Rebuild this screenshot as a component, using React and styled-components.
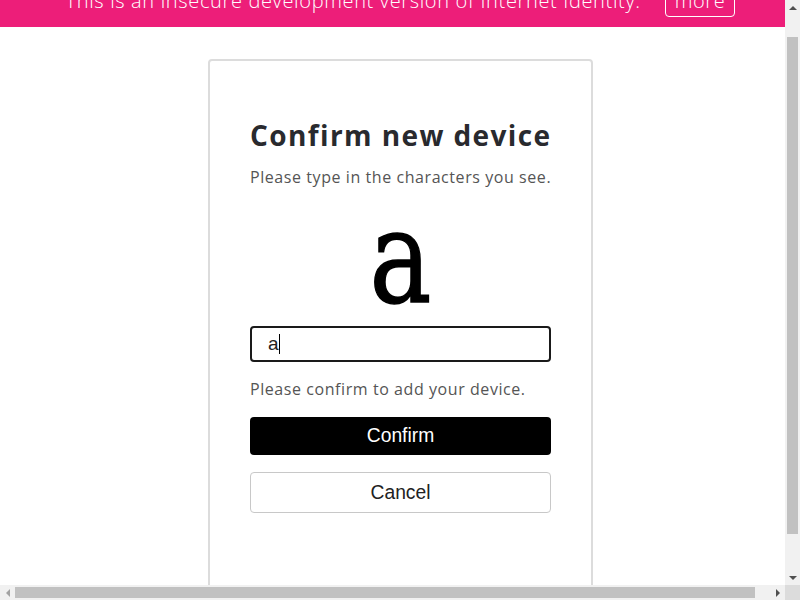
import React, { useLayoutEffect, useRef } from "react"
import styled, { createGlobalStyle } from "styled-components"

const GlobalStyle = createGlobalStyle`
  html, body {
    margin: 0;
    padding: 0;
    background: #fff;
    overflow: hidden;
  }
  body {
    font-family: "Open Sans", "Noto Sans", sans-serif;
  }
`

// browser frame: content area plus the two scroll bars and their corner
const Frame = styled.div`
  width: 800px;
  height: 600px;
  display: grid;
  grid-template-columns: 785px 15px;
  grid-template-rows: 585px 15px;
  background: #f1f1f1;
`

const Viewport = styled.div`
  overflow: hidden;
  background: #fff;
`

const ScrollBar = styled.div`
  display: flex;
  flex-direction: ${(p) => (p.$vertical ? "column" : "row")};
  background: #f1f1f1;
`

const Track = styled.div`
  flex: 1;
  display: flex;
  flex-direction: ${(p) => (p.$vertical ? "column" : "row")};
`

const Thumb = styled.div`
  background: #c1c1c1;
  ${(p) =>
    p.$vertical
      ? `margin: 22px 2px 0; height: 497px;`
      : `margin: 2px 0; width: 740px;`}
`

const ArrowButton = styled.div`
  width: 15px;
  height: 15px;
  flex: none;
  display: flex;
  align-items: center;
  justify-content: center;

  &::after {
    content: "";
    width: 0;
    height: 0;
    border: 4px solid transparent;
    ${(p) => {
      const c = p.$disabled ? "#a3a3a3" : "#505050"
      if (p.$dir === "up") return `border-bottom-color: ${c}; border-top-width: 0;`
      if (p.$dir === "down") return `border-top-color: ${c}; border-bottom-width: 0;`
      if (p.$dir === "left") return `border-right-color: ${c}; border-left-width: 0;`
      return `border-left-color: ${c}; border-right-width: 0;`
    }}
  }
`

const Corner = styled.div`
  background: #dcdcdc;
`

const Page = styled.div`
  width: 801px;
  min-height: 653px;
  display: flex;
  flex-direction: column;
  align-items: center;
`

const Banner = styled.div`
  align-self: stretch;
  height: 53px;
  background: #ed1e79;
  color: #fff;
  display: flex;
  align-items: center;
  justify-content: center;
  gap: 24px;
  font-size: 20px;
  font-weight: 300;
  letter-spacing: 0.65px;
`

const MoreButton = styled.button`
  background: transparent;
  color: #fff;
  border: 1px solid #fff;
  border-radius: 4px;
  height: 32px;
  padding: 0 9px;
  font-family: inherit;
  font-size: 20px;
  font-weight: 300;
  letter-spacing: 0.65px;
`

const Card = styled.main`
  margin-top: 32px;
  width: 385px;
  height: 536px;
  box-sizing: border-box;
  border: 2px solid #dcdcdc;
  border-radius: 4px;
  padding: 56px 40px 40px;
  display: flex;
  flex-direction: column;
`

const Title = styled.h1`
  margin: 0;
  font-size: 28px;
  font-weight: 700;
  color: #292a2e;
  line-height: 36px;
  letter-spacing: 1.4px;
  white-space: nowrap;
`

const Paragraph = styled.p`
  margin: ${(p) => p.$top || 0}px 0 0;
  font-size: 16px;
  color: #555;
  line-height: 20px;
  letter-spacing: 0.57px;
  white-space: nowrap;
`

const Captcha = styled.div`
  margin-top: 20px;
  height: 100px;
  display: flex;
  align-items: center;
  justify-content: center;
  font-family: "DejaVu Serif", serif;
  font-size: 130px;
  line-height: 1;
  color: #000;
  -webkit-text-stroke: 1.5px #000;
  filter: blur(0.7px);
  transform: scaleX(0.8);
`

const Input = styled.div`
  margin-top: 19px;
  height: 36px;
  box-sizing: border-box;
  border: 2px solid #1a1a1a;
  border-radius: 4px;
  padding: 0 16px;
  display: flex;
  align-items: center;
  font-family: "Liberation Sans", Arial, sans-serif;
  font-size: 19px;
  color: #222;
`

const Caret = styled.span`
  display: inline-block;
  width: 1px;
  height: 20px;
  background: #000;
`

const Button = styled.button`
  margin-top: ${(p) => p.$top}px;
  height: ${(p) => (p.$primary ? 38 : 41)}px;
  border-radius: 4px;
  border: ${(p) => (p.$primary ? "none" : "1px solid #c8c8c8")};
  background: ${(p) => (p.$primary ? "#000" : "#fff")};
  color: ${(p) => (p.$primary ? "#fff" : "#222")};
  font-family: "Liberation Sans", Arial, sans-serif;
  font-size: 19.3px;
`

export default function App() {
  const viewport = useRef(null)

  useLayoutEffect(() => {
    if (viewport.current) viewport.current.scrollTop = 26
  }, [])

  return (
    <>
      <GlobalStyle />
      <Frame>
        <Viewport ref={viewport}>
          <Page>
            <Banner>
              <span>This is an insecure development version of Internet Identity.</span>
              <MoreButton>more</MoreButton>
            </Banner>
            <Card>
              <Title>Confirm new device</Title>
              <Paragraph $top={14}>Please type in the characters you see.</Paragraph>
              <Captcha>a</Captcha>
              <Input>
                a<Caret />
              </Input>
              <Paragraph $top={17}>Please confirm to add your device.</Paragraph>
              <Button $primary $top={18}>Confirm</Button>
              <Button $top={17}>Cancel</Button>
            </Card>
          </Page>
        </Viewport>
        <ScrollBar $vertical>
          <ArrowButton $dir="up" />
          <Track $vertical>
            <Thumb $vertical />
          </Track>
          <ArrowButton $dir="down" />
        </ScrollBar>
        <ScrollBar>
          <ArrowButton $dir="left" $disabled />
          <Track>
            <Thumb />
          </Track>
          <ArrowButton $dir="right" />
        </ScrollBar>
        <Corner />
      </Frame>
    </>
  )
}
